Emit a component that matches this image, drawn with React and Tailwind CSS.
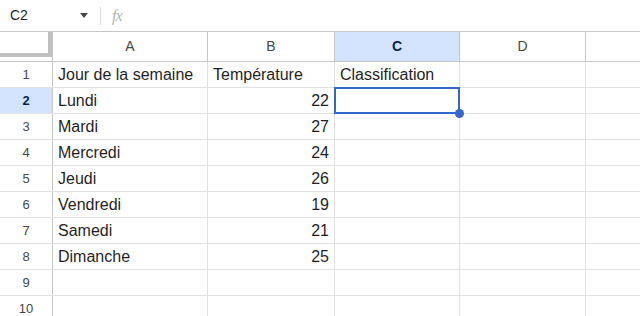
const COLS = [
  { key: 'A', w: 'w-[155px]' },
  { key: 'B', w: 'w-[127px]' },
  { key: 'C', w: 'w-[125px]' },
  { key: 'D', w: 'w-[126px]' },
  { key: 'E', w: 'w-[60px]' },
]

const ROWS = [
  ['Jour de la semaine', 'Température', 'Classification'],
  ['Lundi', '22'],
  ['Mardi', '27'],
  ['Mercredi', '24'],
  ['Jeudi', '26'],
  ['Vendredi', '19'],
  ['Samedi', '21'],
  ['Dimanche', '25'],
  [],
  [],
]

export default function App() {
  return (
    <div className="w-[640px] h-[316px] overflow-hidden bg-white text-[#1f1f1f] font-['Liberation_Sans',Arial,sans-serif]">
      {/* formula bar */}
      <div className="h-[32px] flex items-center border-b border-[#c4c7c5]">
        <div className="w-[100px] flex items-center pl-[10px] pr-2 text-[14px]">
          <span className="flex-1">C2</span>
          <svg width="8" height="5" viewBox="0 0 8 5" className="mr-[4px]"><path d="M0 0h8L4 5z" fill="#444746" /></svg>
        </div>
        <div className="w-px h-[18px] bg-[#d9d9d9]" />
        <span className="ml-[11px] text-[16px] italic text-[#b4b4b4] font-['Liberation_Serif',serif] tracking-[-1px]">fx</span>
      </div>

      {/* column header */}
      <div className="flex h-[30px] border-b border-[#c4c7c5]">
        <div className="w-[53px] shrink-0 relative border-r border-[#c4c7c5]">
          <div className="absolute left-0 top-0 w-[52px] h-[25px] border-r-[4px] border-b-[4px] border-[#c0c0c0]" />
        </div>
        {COLS.map((c) => (
          <div
            key={c.key}
            className={`${c.w} shrink-0 flex items-center justify-center text-[14px] border-r border-[#c4c7c5] ${c.key === 'C' ? 'bg-[#d3e3fd] font-bold text-[#0b1f4a]' : 'text-[#444746]'}`}
          >
            {c.key === 'E' ? '' : c.key}
          </div>
        ))}
      </div>

      {/* rows */}
      {ROWS.map((r, i) => {
        const sel = i === 1
        return (
          <div key={i} className="flex h-[26px] border-b border-[#e1e1e1]">
            <div
              className={`w-[53px] shrink-0 flex items-center justify-center text-[13px] border-r border-[#c4c7c5] ${sel ? 'bg-[#d3e3fd] font-bold text-[#0b1f4a]' : 'text-[#444746]'}`}
            >
              {i + 1}
            </div>
            <div className="w-[155px] shrink-0 flex items-center px-[5px] text-[16px] border-r border-[#e1e1e1]">{r[0]}</div>
            <div className={`w-[127px] shrink-0 flex items-center px-[5px] text-[16px] border-r border-[#e1e1e1] ${i === 0 ? '' : 'justify-end'}`}>{r[1]}</div>
            <div className="w-[125px] shrink-0 relative flex items-center px-[5px] text-[16px] border-r border-[#e1e1e1]">
              {r[2]}
              {sel && (
                <>
                  <div className="absolute z-10 -left-px -top-px w-[126px] h-[27px] border-2 border-[#3466cc]" />
                  <div className="absolute z-20 right-[-5px] bottom-[-5px] w-[9px] h-[9px] rounded-full bg-[#3466cc]" />
                </>
              )}
            </div>
            <div className="w-[126px] shrink-0 border-r border-[#e1e1e1]" />
            <div className="w-[60px] shrink-0" />
          </div>
        )
      })}
    </div>
  )
}
